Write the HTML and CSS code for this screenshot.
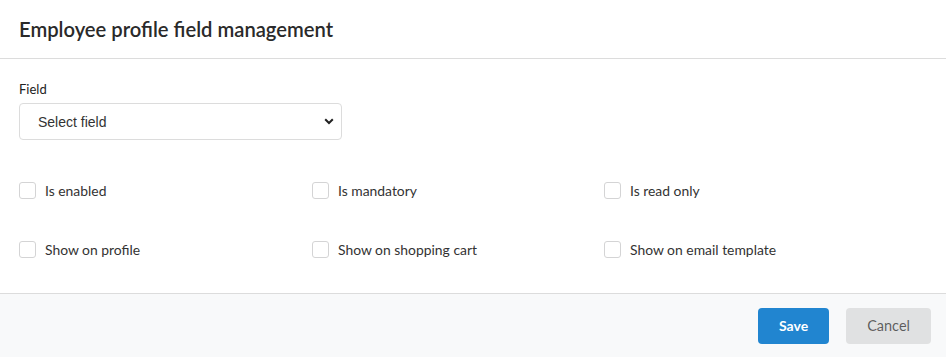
FILE: index.html
```html
<!DOCTYPE html>
<html lang="en">
<head>
  <meta charset="UTF-8">
  <title>Employee profile field management</title>
  <link rel="stylesheet" href="styles.css">
</head>
<body>
  <div class="modal">
    <div class="modal-header">Employee profile field management</div>

    <div class="modal-content">
      <div class="field">
        <label class="field-label" for="field-select">Field</label>
        <div class="select-wrap">
          <select id="field-select" class="select">
            <option>Select field</option>
          </select>
          <svg class="select-arrow" width="10" height="7" viewBox="0 0 10 7">
            <path d="M1.2 1.2 L5 5 L8.8 1.2" fill="none" stroke="#222" stroke-width="2"/>
          </svg>
        </div>
      </div>

      <div class="options">
        <label class="check"><span class="box"></span>Is enabled</label>
        <label class="check"><span class="box"></span>Is mandatory</label>
        <label class="check"><span class="box"></span>Is read only</label>
        <label class="check"><span class="box"></span>Show on profile</label>
        <label class="check"><span class="box"></span>Show on shopping cart</label>
        <label class="check"><span class="box"></span>Show on email template</label>
      </div>
    </div>

    <div class="modal-actions">
      <button class="btn primary">Save</button>
      <button class="btn">Cancel</button>
    </div>
  </div>
</body>
</html>
```

FILE: styles.css
```css
body {
  margin: 0;
  font-family: Lato, 'Liberation Sans', sans-serif;
  background: white;
  color: rgba(0, 0, 0, 0.87);
}

.modal {
  width: 946px;
  height: 357px;
  display: flex;
  flex-direction: column;
}

.modal-header {
  height: 58px;
  padding: 0 19px;
  display: flex;
  align-items: center;
  font-family: 'Lato Semibold', Lato, sans-serif;
  font-size: 20.2px;
  font-weight: 600;
  color: #2a2a2a;
  border-bottom: 1px solid #dcdcdc;
}

.modal-content {
  flex: 1;
  padding: 22px 19px 0;
}

.field-label {
  display: block;
  font-size: 13px;
  margin-bottom: 6px;
  color: #222;
}

.select-wrap {
  position: relative;
  width: 323px;
}

.select {
  appearance: none;
  width: 100%;
  height: 37px;
  padding: 0 18px;
  border: 1px solid #dcdcdc;
  border-radius: 4px;
  background: white;
  font-family: 'Liberation Sans', Arial, sans-serif;
  font-size: 14px;
  color: #333;
}

.select-arrow {
  position: absolute;
  right: 8px;
  top: 15px;
}

.options {
  display: grid;
  grid-template-columns: 293px 292px 1fr;
  row-gap: 42px;
  margin-top: 42px;
}

.check {
  display: flex;
  align-items: center;
  font-size: 13.9px;
  color: #333;
}

.box {
  width: 15px;
  height: 15px;
  border: 1px solid #d4d4d5;
  border-radius: 3px;
  margin-right: 9px;
}

.modal-actions {
  height: 63px;
  border-top: 1px solid #dcdcdc;
  background: #f8f9fa;
  display: flex;
  align-items: center;
  justify-content: flex-end;
  gap: 17px;
  padding-right: 15px;
}

.btn {
  height: 36px;
  padding: 0 21px;
  border: none;
  border-radius: 4px;
  background: #e0e1e2;
  color: rgba(0, 0, 0, 0.6);
  font-family: Lato, sans-serif;
  font-size: 14.5px;
}

.btn.primary {
  background: #2185d0;
  color: white;
  font-weight: 700;
  font-size: 14px;
}
```
